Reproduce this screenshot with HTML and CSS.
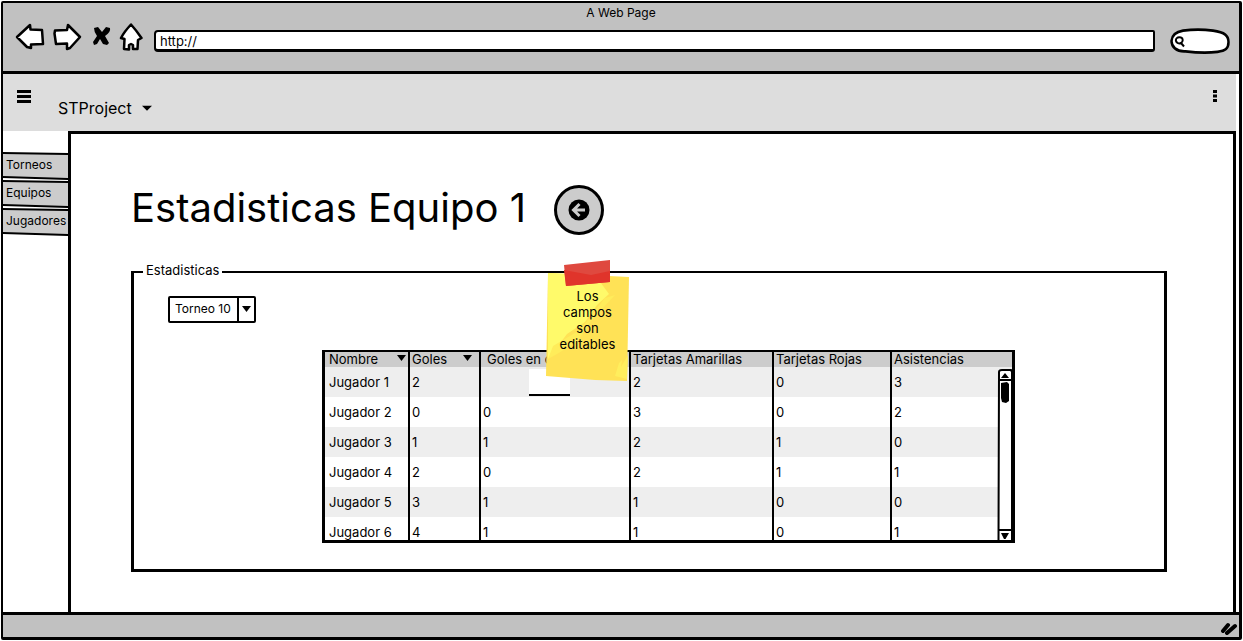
FILE: index.html
```html
<!DOCTYPE html>
<html lang="es">
<head>
<meta charset="utf-8">
<title>A Web Page</title>
<link rel="stylesheet" href="styles.css">
</head>
<body>
<div class="window">
  <header class="chrome">
    <div class="chrome-title">A Web Page</div>
    <div class="chrome-bar">
      <button class="icon-btn" aria-label="Atrás"><svg width="30" height="28" viewBox="0 0 30 28"><path class="outline" d="M2 14 15 2l.5 4.500L27 7l1 14-12 .5V25L12 24Z"/></svg></button>
      <button class="icon-btn" aria-label="Adelante"><svg width="30" height="28" viewBox="0 0 30 28"><path class="outline" d="M28 14 16 2l-1 5-12 .5-.5 3L4 21l11-.5V26l3-1Z"/></svg></button>
      <button class="icon-btn stop" aria-label="Detener"><svg width="18" height="20" viewBox="0 0 18 20"><path d="M1 2 5 1l4 5 4-5 4 1q1 4-5 8l4 7-2 2-4-1-3-5-3 5-3 1-1-3 4-6Q1 6 1 2Z"/></svg></button>
      <button class="icon-btn home" aria-label="Inicio"><svg width="24" height="28" viewBox="0 0 24 28"><path class="outline" d="M12 1.500Q17 7 22.500 15L19 17l-.5 9h-4.500v-4l-2-1-2 1v4.500L5 26l.5-10L2 15Q5 9 12 1.500Z"/></svg></button>
      <input class="address" type="text" value="http://" aria-label="Dirección">
      <div class="search">
        <svg class="stretch" viewBox="0 0 60 24" preserveAspectRatio="none"><path class="outline" d="M13 2.500Q28 .5 43 2.500C55 4 58.500 7 58.500 13c0 6-3 8-11 9q-14 1.500-32-.5C6 22 1.500 17 1.500 12 2 7 6 3.500 13 2.500Z"/></svg>
        <svg class="lens" width="12" height="12" viewBox="0 0 12 12"><path class="line" d="M7 1.500C3 .5 1.500 3 2 5s3 3 5 2 2.500-4.500 0-5.500M7 7l3 3.500"/></svg>
        <input type="search" aria-label="Buscar">
      </div>
    </div>
  </header>
  <nav class="toolbar">
    <button class="icon-btn menu" aria-label="Menú"><svg width="14" height="13" viewBox="0 0 14 13"><path class="line" d="M0 1.500h14M0 6.500h14M0 11.500h14"/></svg></button>
    <button class="project">STProject <svg class="caret" width="10" height="6" viewBox="0 0 11 6"><path d="M0 .5h11L5.500 6Z"/></svg></button>
    <button class="icon-btn more" aria-label="Más"><svg width="4" height="14" viewBox="0 0 4 14"><path d="M0 1h4v3H0ZM0 5.500h4v3H0ZM0 10h4v3H0Z"/></svg></button>
  </nav>
  <div class="body">
    <nav class="sidebar">
      <a class="tab" href="#torneos"><svg class="stretch" viewBox="0 0 66 28" preserveAspectRatio="none"><path class="tabshape" d="M-1 1 67 2V27L-1 25Z"/></svg><span>Torneos</span></a>
      <a class="tab" href="#equipos"><svg class="stretch" viewBox="0 0 66 28" preserveAspectRatio="none"><path class="tabshape" d="M-1 1 67 2V27L-1 25Z"/></svg><span>Equipos</span></a>
      <a class="tab" href="#jugadores"><svg class="stretch" viewBox="0 0 66 28" preserveAspectRatio="none"><path class="tabshape" d="M-1 1 67 2V27L-1 25Z"/></svg><span>Jugadores</span></a>
    </nav>
    <main class="panel">
      <div class="heading">
        <h1>Estadisticas Equipo 1</h1>
        <button class="back" aria-label="Volver"><svg width="22" height="22" viewBox="0 0 22 22"><circle cx="11" cy="11" r="10.500"/><path class="arrow" d="M17 11H6M11.500 5 5.500 11l6 6"/></svg></button>
      </div>
      <fieldset class="group">
        <legend>Estadisticas</legend>
        <div class="select">
          <select aria-label="Torneo"><option>Torneo 10</option></select>
          <svg class="caret" width="9" height="6" viewBox="0 0 11 6" preserveAspectRatio="none"><path d="M0 0h11L5.500 6Z"/></svg>
        </div>
        <div class="grid">
          <table>
            <colgroup><col class="c1"><col class="c2"><col class="c3"><col class="c4"><col class="c5"><col class="c6"></colgroup>
            <thead>
              <tr>
                <th><span class="sort">Nombre <svg width="9" height="6" viewBox="0 0 9 6"><path d="M0 0h9L4.500 6Z"/></svg></span></th>
                <th><span class="sort wide">Goles <svg width="9" height="6" viewBox="0 0 9 6"><path d="M0 0h9L4.500 6Z"/></svg></span></th>
                <th class="inset">Goles en contra</th><th>Tarjetas Amarillas</th><th>Tarjetas Rojas</th><th>Asistencias</th>
              </tr>
            </thead>
            <tbody>
              <tr><td>Jugador 1</td><td>2</td><td><input class="edit" type="text" aria-label="Goles en contra, Jugador 1"></td><td>2</td><td>0</td><td>3</td></tr>
              <tr><td>Jugador 2</td><td>0</td><td>0</td><td>3</td><td>0</td><td>2</td></tr>
              <tr><td>Jugador 3</td><td>1</td><td>1</td><td>2</td><td>1</td><td>0</td></tr>
              <tr><td>Jugador 4</td><td>2</td><td>0</td><td>2</td><td>1</td><td>1</td></tr>
              <tr><td>Jugador 5</td><td>3</td><td>1</td><td>1</td><td>0</td><td>0</td></tr>
              <tr><td>Jugador 6</td><td>4</td><td>1</td><td>1</td><td>0</td><td>1</td></tr>
            </tbody>
          </table>
          <svg class="scroll" width="16" height="173" viewBox="0 0 16 173"><path class="track" d="M2 3Q2 1 5 1h9l1 2v169H1.500ZM1.500 11H15M1.500 161H15"/><path d="M4 9l4-5 4 5ZM4 164h8l-3.500 6H7ZM4 14l6-1 2 2v17l-3 2-4-1-1-4Z"/></svg>
        </div>
        <aside class="note">
          <svg class="paper" width="86" height="122" viewBox="0 0 86 122"><path fill="#ffe256" d="M3 13 84 17 82 121 50 120 1 116Z"/><path fill="#fffa6a" d="M3 13 50 15 64 34 52 45 40 62 22 74 3 99Z"/><path fill="#ffec5a" d="M35 70 60 38 70 35 45 62 32 82 12 94 3 99 8 86Z"/><path fill="#ffee5d" d="M70 116 74 103 77 100 76 107 83 95 82 119Z"/><path fill="#df493f" d="M19 5 65 0v22L21 26Z"/><path fill="#e0342b" d="M19 10 46 15 65 11v11L21 26Z"/></svg>
          <p>Los campos son editables</p>
        </aside>
      </fieldset>
    </main>
  </div>
  <footer class="status"><svg width="18" height="14" viewBox="0 0 18 14"><path class="grip" d="M3 10 8 4M7 12 15 5"/></svg></footer>
</div>
</body>
</html>
```
FILE: styles.css
```css
* { box-sizing: border-box; }
body {
  margin: 0;
  padding: 1px;
  background: #fff;
  color: #000;
  font: 13px/16px Inter, "Liberation Sans", sans-serif;
}
button, input, select { font: inherit; color: inherit; }
button { border: 0; padding: 0; background: none; }
svg { display: block; }
.outline { fill: #fff; stroke: #000; stroke-width: 2.5; stroke-linejoin: round; }
.line { fill: none; stroke: #000; stroke-width: 2; }
.menu .line { stroke-width: 3; }
.stretch { position: absolute; inset: 0; width: 100%; height: 100%; }

.window {
  display: flex;
  flex-direction: column;
  min-height: calc(100vh - 2px);
  border: solid #000;
  border-width: 2px 3px 3px 2px;
  border-radius: 2px;
}
.chrome { height: 71px; background: #c1c1c1; border-bottom: 3px solid #000; }
.chrome-title { padding-top: 2px; text-align: center; font-size: 12px; }
.chrome-bar { display: flex; align-items: flex-start; padding: 2px 9px 0 12px; }
.icon-btn { margin-right: 7px; }
.icon-btn.stop { margin: 3px 8px 0 4px; }
.icon-btn.home { margin-right: 11px; }
.address {
  flex: 1;
  min-width: 0;
  height: 22px;
  margin-top: 7px;
  padding: 0 4px;
  border: solid #000;
  border-width: 2px 2px 3px;
  border-radius: 4px 2px 3px 4px;
  background: #fff;
  font-size: 13px;
}
.search { position: relative; width: 60px; height: 26px; margin: 5px 0 0 15px; }
.search input { position: relative; width: 40px; height: 16px; margin: 4px 0 0 16px; border: 0; background: none; }
.lens { position: absolute; left: 4px; top: 8px; }

.toolbar { display: flex; align-items: flex-start; height: 57px; margin-right: 3px; padding: 0 19px 0 14px; background: #ddd; }
.toolbar .icon-btn { margin: 16px 0 0; }
.toolbar .more { margin-top: 15px; }
.project { display: flex; align-items: center; gap: 10px; margin: 24px auto 0 27px; font-size: 16px; line-height: 20px; }

.body { display: flex; flex: 1; margin-right: 3px; }
.sidebar { width: 65px; padding-top: 21px; }
.tab { position: relative; display: block; height: 28px; padding: 5px 3px; color: #000; font-size: 12px; text-decoration: none; white-space: nowrap; }
.tab span { position: relative; }
.tabshape { fill: #ccc; stroke: #000; stroke-width: 2; }

.panel { flex: 1; min-width: 0; padding: 51px 66px 40px 60px; border: solid #000; border-width: 3px 3px 0; }
.heading { display: flex; align-items: center; gap: 28px; }
h1 { margin: 0; font-size: 40px; line-height: 44px; font-weight: 400; padding-bottom: 4px; }
.back { display: grid; place-items: center; width: 50px; height: 50px; border: 3px solid #000; border-radius: 50%; background: #ccc; }
.arrow { fill: none; stroke: #ccc; stroke-width: 3; }

.group { position: relative; margin: 27px 0 0; padding: 14px 34px 26px; border: solid #000; border-width: 2px 3px 3px; }
legend { margin-left: -25px; padding: 0 3px 4px; }
.select { position: relative; width: 88px; height: 27px; }
select { width: 100%; height: 100%; padding: 0 5px 2px; border: 2px solid #000; border-radius: 2px; background: linear-gradient(#000, #000) 67px 0 / 2px 100% no-repeat #fff; font-size: 12px; appearance: none; }
.select .caret { position: absolute; right: 5px; top: 10px; }

.grid { position: relative; max-width: 693px; height: 193px; margin: 27px 0 0 154px; border: solid #000; border-width: 2px 3px; border-bottom-width: 3px; overflow: hidden; }
table { width: 100%; border-collapse: separate; border-spacing: 0; table-layout: fixed; }
.c1 { width: 85px; }
.c2 { width: 71px; }
.c3 { width: 150px; }
.c4 { width: 143px; }
.c5 { width: 118px; }
th, td { padding: 0 2px; border-right: 2px solid #000; text-align: left; font-weight: 400; white-space: nowrap; }
th:last-child, td:last-child { border-right: 0; }
th:first-child, td:first-child { padding-left: 4px; }
th { height: 15px; line-height: 15px; background: #ccc; }
th.inset { padding-left: 6px; }
td { height: 30px; }
tbody tr:nth-child(odd) { background: #eee; }
.sort { display: flex; justify-content: space-between; align-items: flex-start; }
.sort svg { margin-top: 3px; }
.sort.wide { padding-right: 5px; }
.edit { display: block; width: 41px; height: 27px; margin-left: 46px; border: 0; border-bottom: 2px solid #000; background: #fff; }
.scroll { position: absolute; right: -1px; top: 17px; }
.track { fill: #fff; stroke: #000; stroke-width: 2; }

.note { position: absolute; left: 411px; top: -22px; width: 86px; height: 122px; }
.paper { position: absolute; inset: 0; }
.note p { position: relative; margin: 0; padding: 28px 13px 0 12px; text-align: center; }

.status { display: flex; justify-content: flex-end; align-items: center; height: 25px; padding: 3px 1px 0 0; border-top: 3px solid #000; background: #c1c1c1; }
.grip { fill: none; stroke: #000; stroke-width: 4; stroke-linecap: round; }
```
